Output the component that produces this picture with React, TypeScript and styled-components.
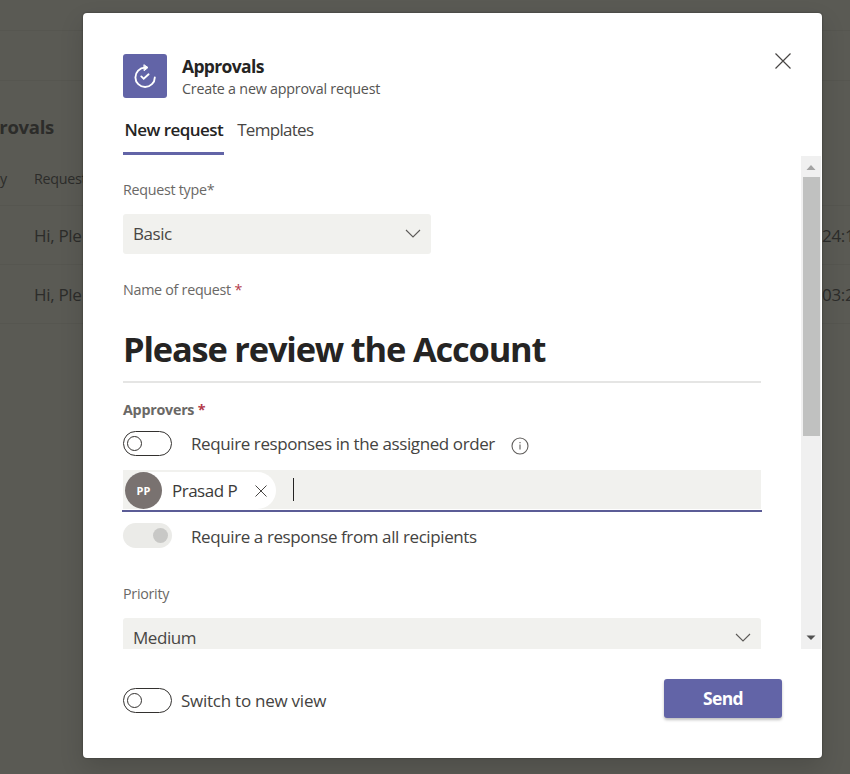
import React from "react";
import styled, { createGlobalStyle } from "styled-components";

const Global = createGlobalStyle`
  *, *::before, *::after { box-sizing: border-box; }
  body { margin: 0; background: #5a5a54; }
  body, button { font-family: "Open Sans", "Noto Sans", sans-serif; }
`;

const Page = styled.div`
  position: relative;
  width: 850px;
  height: 774px;
  overflow: hidden;
  background: #5a5a54;
  color: #2c2c2a;
`;

const Bar = styled.div<{ $h: number }>`
  height: ${(p) => p.$h}px;
  border-bottom: 1px solid #565650;
`;

const PageTitle = styled.h1`
  margin: 0;
  height: 81px;
  padding-top: 34px;
  line-height: 24px;
  font-size: 18.5px;
  font-weight: 700;
  letter-spacing: -0.3px;
  text-indent: -36px;
  white-space: nowrap;
`;

const ListRow = styled.div<{ $h: number; $size: number; $bottom?: number }>`
  display: grid;
  grid-template-columns: 34px 788px 1fr;
  align-items: center;
  height: ${(p) => p.$h}px;
  padding-bottom: ${(p) => p.$bottom ?? 0}px;
  border-bottom: 1px solid #565650;
  font-size: ${(p) => p.$size}px;
  letter-spacing: -0.3px;
  white-space: nowrap;
  overflow: hidden;
`;

const Dialog = styled.section`
  position: absolute;
  left: 83px;
  top: 13px;
  width: 739px;
  height: 745px;
  display: flex;
  flex-direction: column;
  background: #fff;
  border-radius: 4px;
  box-shadow: 0 0 2px rgba(0, 0, 0, 0.45), 0 10px 24px rgba(0, 0, 0, 0.14);
  color: #3b3a39;
`;

const Header = styled.header`
  display: flex;
  align-items: flex-start;
  height: 97px;
  padding: 40px 31px 0 40px;
`;

const AppIcon = styled.div`
  width: 44px;
  height: 44px;
  margin-top: 1px;
  border-radius: 3px;
  background: #6264a7;
`;

const HeaderText = styled.div`
  flex: 1;
  padding: 1px 0 0 15px;
`;

const AppName = styled.div`
  font-size: 17.5px;
  font-weight: 700;
  line-height: 24px;
  letter-spacing: -0.65px;
  color: #252423;
`;

const AppHint = styled.div`
  padding-top: 2px;
  font-size: 14.3px;
  line-height: 18px;
  letter-spacing: -0.22px;
  color: #555452;
`;

const IconButton = styled.button`
  display: flex;
  padding: 0;
  border: 0;
  background: none;
  color: #484644;
`;

const Tabs = styled.nav`
  display: flex;
  gap: 12px;
  height: 46px;
  padding-left: 40px;
`;

const Tab = styled.div<{ $active?: boolean }>`
  height: 45px;
  padding: 8px ${(p) => (p.$active ? 1 : 0)}px 0 ${(p) => (p.$active ? 1.5 : 1)}px;
  line-height: 23px;
  font-size: 17px;
  font-weight: ${(p) => (p.$active ? 600 : 400)};
  letter-spacing: ${(p) => (p.$active ? -0.55 : -0.7)}px;
  color: ${(p) => (p.$active ? "#252423" : "#484644")};
  border-bottom: 3px solid ${(p) => (p.$active ? "#6264a7" : "transparent")};
`;

const Body = styled.div`
  display: flex;
  height: 493px;
  padding: 0 1px 0 39px;
  overflow: hidden;
`;

const Form = styled.div`
  width: 640px;
  height: 493px;
  margin-right: 39px;
  padding: 22px 1px 0;
  overflow: hidden;
`;

const Label = styled.div<{ $strong?: boolean }>`
  height: 24px;
  line-height: 24px;
  font-size: 14.3px;
  font-weight: ${(p) => (p.$strong ? 700 : 400)};
  letter-spacing: ${(p) => (p.$strong ? -0.25 : -0.28)}px;
  color: #6a6866;
`;

const Required = styled.span`
  color: #b33a4b;
`;

const Select = styled.div<{ $w?: number }>`
  display: flex;
  align-items: center;
  justify-content: space-between;
  width: ${(p) => (p.$w ? `${p.$w}px` : "100%")};
  height: 40px;
  margin: 12px 0 24px;
  padding: 0 10px 1px;
  border-radius: 3px;
  background: #f1f1ee;
  font-size: 17px;
  letter-spacing: -0.45px;
  color: #484644;
`;

const NameField = styled.div`
  height: 67px;
  margin: 14px 0 15px;
  line-height: 66px;
  border-bottom: 2px solid #e5e5e4;
  font-size: 34.4px;
  font-weight: 700;
  letter-spacing: -1.17px;
  color: #252423;
  white-space: nowrap;
`;

const ToggleRow = styled.div<{ $gap: number; $h: number; $spacing?: number }>`
  display: flex;
  align-items: center;
  gap: ${(p) => p.$gap}px;
  height: ${(p) => p.$h}px;
  font-size: 17px;
  letter-spacing: ${(p) => p.$spacing ?? -0.4}px;
  color: #444341;
  white-space: nowrap;
`;

const Track = styled.span<{ $disabled?: boolean }>`
  display: flex;
  align-items: center;
  justify-content: ${(p) => (p.$disabled ? "flex-end" : "flex-start")};
  width: 49px;
  height: 25px;
  padding: 0 ${(p) => (p.$disabled ? 4 : 3)}px;
  border-radius: 13px;
  border: ${(p) => (p.$disabled ? "0" : "1.3px solid #33312f")};
  background: ${(p) => (p.$disabled ? "#ebebe8" : "#fff")};
  &::before {
    content: "";
    width: 15px;
    height: 15px;
    border-radius: 50%;
    border: ${(p) => (p.$disabled ? "0" : "1.2px solid #33312f")};
    background: ${(p) => (p.$disabled ? "#c8c8c6" : "#fff")};
  }
`;

const ToggleText = styled.span<{ $top?: number }>`
  padding-top: ${(p) => p.$top ?? 2}px;
`;

const Info = styled.svg`
  margin: 6px 0 0 -3px;
`;

const People = styled.div`
  display: flex;
  align-items: flex-start;
  width: 640px;
  height: 42px;
  margin: 6px -1px 11px;
  padding: 2px 3px;
  background: linear-gradient(#f1f1ee, #f1f1ee) 1px 0 / 638px 39px no-repeat;
  border-bottom: 2px solid #5b5c96;
`;

const Chip = styled.div`
  display: flex;
  align-items: center;
  width: 151px;
  height: 37px;
  border-radius: 19px;
  background: #fff;
  font-size: 17px;
  letter-spacing: -0.5px;
`;

const Avatar = styled.span`
  display: grid;
  place-items: center;
  width: 37px;
  height: 37px;
  margin-right: 10px;
  border-radius: 50%;
  background: #797270;
  color: #fff;
  font-size: 11px;
  font-weight: 700;
  letter-spacing: 0;
`;

const ChipName = styled.span`
  width: 83px;
`;

const Caret = styled.span`
  width: 1px;
  height: 23px;
  margin: 6px 0 0 17px;
  background: #252423;
`;

const PriorityGroup = styled.div`
  margin-top: 34px;
`;

const Scrollbar = styled.div`
  display: flex;
  flex-direction: column;
  align-items: center;
  justify-content: space-between;
  width: 20px;
  background: #f0f0f0;
`;

const Thumb = styled.div`
  width: 17px;
  height: 259px;
  margin-bottom: auto;
  background: #c0c1c0;
`;

const Footer = styled.footer`
  display: flex;
  align-items: flex-start;
  justify-content: space-between;
  padding: 30px 40px 0;
`;

const FooterToggle = styled.div`
  padding-top: 7px;
`;

const Send = styled.button`
  width: 118px;
  height: 39px;
  padding: 0 0 1px;
  border: 0;
  border-radius: 3px;
  background: #6264a7;
  box-shadow: 0 2px 3px rgba(0, 0, 0, 0.25);
  color: #fff;
  font-size: 17.5px;
  font-weight: 700;
  letter-spacing: -0.65px;
`;

const Cross = ({ size, width }: { size: number; width: number }) => (
  <svg width={size} height={size} viewBox={`0 0 ${size} ${size}`} fill="none" stroke="#484644" strokeWidth={width}>
    <path d={`M.5 .5 ${size - 0.5} ${size - 0.5}M${size - 0.5} .5 .5 ${size - 0.5}`} />
  </svg>
);

const Chevron = () => (
  <svg width="16" height="9" viewBox="0 0 16 9" fill="none" stroke="#5c5a58" strokeWidth="1.1">
    <path d="M1 1l7 7 7-7" />
  </svg>
);

const ApprovalsLogo = () => (
  <svg width="44" height="44" viewBox="0 0 44 44" fill="none" stroke="#fff" strokeWidth="1.9" strokeLinecap="round">
    <path d="M31.8 23.4A9.7 9.7 0 1 1 21.9 13.6" />
    <path d="M21.2 10.9l3.8 2.6-3.6 3z" fill="#fff" strokeWidth="1" strokeLinejoin="round" />
    <path d="M18.3 22.4l2.4 2.4 4.9-4.5" strokeWidth="1.9" />
  </svg>
);

const Arrow = ({ up }: { up?: boolean }) => (
  <svg width="20" height="21" viewBox="0 0 20 21">
    <path d={up ? "M5.5 14l4.5-5 4.5 5z" : "M5.5 7.5l4.5 4.5 4.5-4.5z"} fill={up ? "#a3a3a3" : "#505050"} />
  </svg>
);

export default function App() {
  return (
    <>
      <Global />
      <Page>
        <Bar $h={31} />
        <Bar $h={50} />
        <PageTitle>Approvals</PageTitle>
        <ListRow $h={44} $size={14.3} $bottom={11}>
          <span>y</span>
          <span>Request</span>
        </ListRow>
        <ListRow $h={59} $size={17}>
          <span />
          <span>Hi, Ple</span>
          <span>24:1</span>
        </ListRow>
        <ListRow $h={59} $size={17}>
          <span />
          <span>Hi, Ple</span>
          <span>03:2</span>
        </ListRow>

        <Dialog>
          <Header>
            <AppIcon>
              <ApprovalsLogo />
            </AppIcon>
            <HeaderText>
              <AppName>Approvals</AppName>
              <AppHint>Create a new approval request</AppHint>
            </HeaderText>
            <IconButton aria-label="Close">
              <Cross size={16} width={1.2} />
            </IconButton>
          </Header>
          <Tabs>
            <Tab $active>New request</Tab>
            <Tab>Templates</Tab>
          </Tabs>
          <Body>
            <Form>
              <Label>Request type*</Label>
              <Select $w={308}>
                Basic <Chevron />
              </Select>
              <Label>
                Name of request <Required>*</Required>
              </Label>
              <NameField>Please review the Account</NameField>
              <Label $strong>
                Approvers <Required>*</Required>
              </Label>
              <ToggleRow $gap={19} $h={42}>
                <Track />
                <ToggleText $top={1}>Require responses in the assigned order</ToggleText>
                <Info width="18" height="18" viewBox="0 0 18 18" fill="none" stroke="#605e5c" strokeWidth="1.1">
                  <circle cx="9" cy="9" r="8" />
                  <path d="M9 7.5v5M9 5v1.2" />
                </Info>
              </ToggleRow>
              <People>
                <Chip>
                  <Avatar>PP</Avatar>
                  <ChipName>Prasad P</ChipName>
                  <IconButton aria-label="Remove">
                    <Cross size={12} width={1} />
                  </IconButton>
                </Chip>
                <Caret />
              </People>
              <ToggleRow $gap={19} $h={25}>
                <Track $disabled />
                <ToggleText>Require a response from all recipients</ToggleText>
              </ToggleRow>
              <PriorityGroup>
                <Label>Priority</Label>
                <Select>
                  Medium <Chevron />
                </Select>
              </PriorityGroup>
            </Form>
            <Scrollbar>
              <Arrow up />
              <Thumb />
              <Arrow />
            </Scrollbar>
          </Body>
          <Footer>
            <FooterToggle>
              <ToggleRow $gap={9} $h={28} $spacing={-0.25}>
                <Track />
                <ToggleText $top={1}>Switch to new view</ToggleText>
              </ToggleRow>
            </FooterToggle>
            <Send>Send</Send>
          </Footer>
        </Dialog>
      </Page>
    </>
  );
}
